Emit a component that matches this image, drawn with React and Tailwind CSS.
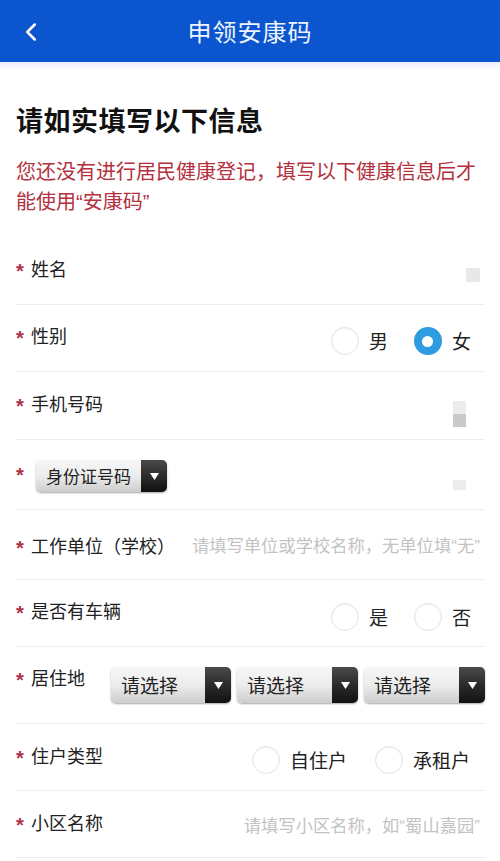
import { ChevronLeft } from 'lucide-react'

const FONT = { fontFamily: '"Noto Sans CJK SC", "Noto Sans", sans-serif' }
const LATIN = { fontFamily: '"Liberation Sans", sans-serif' }

// 半角引号
function Q({ children }) {
  return <span style={LATIN}>{children}</span>
}

function Star() {
  return (
    <span
      className="w-[15px] shrink-0 text-[20px] font-bold leading-none text-[#b0304a] translate-y-[5px]"
      style={LATIN}
    >
      *
    </span>
  )
}

function Label({ children }) {
  return (
    <div className="flex items-start">
      <Star />
      <span className="text-[18px] leading-[24px] text-[#222]">{children}</span>
    </div>
  )
}

function Radio({ label, checked }) {
  return (
    <div className="flex items-center gap-[10px]">
      {checked ? (
        <span className="flex h-[28px] w-[28px] items-center justify-center rounded-full bg-[#2f9be1]">
          <span className="h-[11px] w-[11px] rounded-full bg-white" />
        </span>
      ) : (
        <span className="h-[28px] w-[28px] rounded-full border border-[#e2e2e2] bg-white shadow-[inset_0_1px_2px_rgba(0,0,0,0.04)]" />
      )}
      <span className="text-[19px] text-[#222]">{label}</span>
    </div>
  )
}

function Select({ text, w, h, size }) {
  return (
    <div
      className={`flex overflow-hidden rounded-[5px] shadow-[0_1px_2px_rgba(0,0,0,0.35)] ${w} ${h}`}
    >
      <div className="flex flex-1 items-center bg-gradient-to-b from-[#f7f7f7] via-[#ececec] to-[#cdcdcd] pl-[10px]">
        <span className={`${size} text-[#222]`}>{text}</span>
      </div>
      <div className="flex w-[26px] items-center justify-center bg-gradient-to-b from-[#4a4a4a] to-[#111]">
        <svg width="9" height="7" viewBox="0 0 9 7">
          <path d="M0 0 H9 L4.5 7 Z" fill="#fff" />
        </svg>
      </div>
    </div>
  )
}

function Row({ h, pt, pr = 'pr-[4px]', children }) {
  return (
    <div
      className={`flex items-start justify-between border-b border-[#eeeeee] ${h} ${pt} ${pr}`}
    >
      {children}
    </div>
  )
}

export default function App() {
  return (
    <div className="min-h-[861px] w-[500px] bg-white" style={FONT}>
      {/* 顶栏 */}
      <div className="relative flex h-[62px] items-center justify-center bg-[#0b56cf]">
        <ChevronLeft
          className="absolute left-[16px] top-[17px] text-white"
          size={30}
          strokeWidth={2}
        />
        <span className="text-[24px] tracking-[1px] text-[#eef4ff]">申领安康码</span>
      </div>
      <div className="h-[8px] bg-gradient-to-b from-[#e9eef5] to-white" />

      <div className="px-4">
        <h1 className="mt-[32px] text-[27px] font-bold leading-[36px] tracking-[0.5px] text-[#111]">
          请如实填写以下信息
        </h1>
        <p className="mt-[18px] text-[20px] leading-[30px] text-[#b3303c]">
          您还没有进行居民健康登记，填写以下健康信息后才
          <br />
          能使用<Q>“</Q>安康码<Q>”</Q>
        </p>

        <div className="mt-[20px] flex flex-col">
          <Row h="h-[68px]" pt="pt-[19px]">
            <Label>姓名</Label>
            <span className="mt-[12px] h-[14px] w-[14px] bg-[#e8e8e8]" />
          </Row>

          <Row h="h-[67px]" pt="pt-[18px]">
            <Label>性别</Label>
            <div className="mt-[4px] flex items-center gap-[26px] pr-[9px]">
              <Radio label="男" />
              <Radio label="女" checked />
            </div>
          </Row>

          <Row h="h-[68px]" pt="pt-[19px]">
            <Label>手机号码</Label>
            <div className="mt-[10px] mr-[14px] flex flex-col">
              <span className="h-[13px] w-[13px] bg-[#ececec]" />
              <span className="h-[13px] w-[13px] bg-[#c9c9c9]" />
            </div>
          </Row>

          <Row h="h-[70px]" pt="pt-[20px]">
            <div className="flex items-start">
              <Star />
              <div className="ml-[5px]">
                <Select text="身份证号码" w="w-[131px]" h="h-[32px]" size="text-[17px]" />
              </div>
            </div>
            <span className="mt-[20px] mr-[14px] h-[10px] w-[13px] bg-[#ececec]" />
          </Row>

          <Row h="h-[70px]" pt="pt-[23px]">
            <Label>工作单位（学校）</Label>
            <span className="text-[17.3px] leading-[24px] text-[#c3c3c3]">
              请填写单位或学校名称，无单位填<Q>“</Q>无<Q>”</Q>
            </span>
          </Row>

          <Row h="h-[67px]" pt="pt-[18px]">
            <Label>是否有车辆</Label>
            <div className="mt-[5px] flex items-center gap-[26px] pr-[9px]">
              <Radio label="是" />
              <Radio label="否" />
            </div>
          </Row>

          <Row h="h-[77px]" pt="pt-[18px]" pr="-mr-[1px]">
            <Label>居住地</Label>
            <div className="mt-[2px] flex gap-[6px]">
              <Select text="请选择" w="w-[120px]" h="h-[36px]" size="text-[19px]" />
              <Select text="请选择" w="w-[121px]" h="h-[36px]" size="text-[19px]" />
              <Select text="请选择" w="w-[121px]" h="h-[36px]" size="text-[19px]" />
            </div>
          </Row>

          <Row h="h-[67px]" pt="pt-[19px]">
            <Label>住户类型</Label>
            <div className="mt-[3px] flex items-center gap-[28px] pr-[10px]">
              <Radio label="自住户" />
              <Radio label="承租户" />
            </div>
          </Row>

          <Row h="h-[67px]" pt="pt-[19px]">
            <Label>小区名称</Label>
            <span className="mt-[3px] text-[17.3px] leading-[24px] text-[#c3c3c3]">
              请填写小区名称，如<Q>“</Q>蜀山嘉园<Q>”</Q>
            </span>
          </Row>
        </div>
      </div>
    </div>
  )
}
